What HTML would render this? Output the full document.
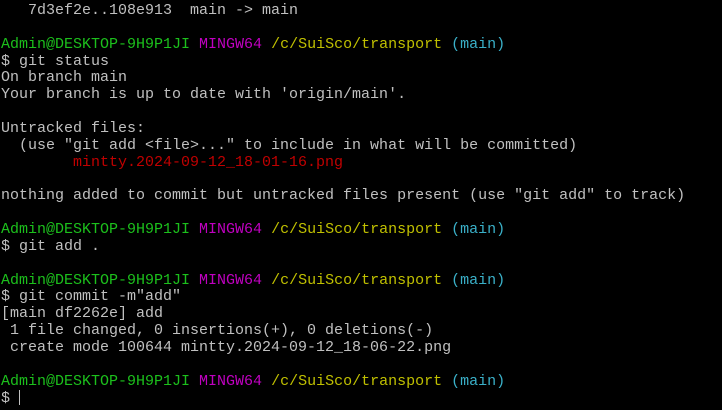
<!DOCTYPE html><html><head><style>
html,body{margin:0;background:#000;width:722px;height:410px;overflow:hidden}
pre{margin:0;padding:3px 0 0 1px;font-family:"Liberation Mono",monospace;font-size:15px;line-height:16.85px;color:#c0c0c0;white-space:pre}
.g{color:#1cc01c}.m{color:#c000c0}.y{color:#c0c000}.c{color:#3ab0c8}.r{color:#c00000}
.cur{display:inline-block;width:1px;height:15px;background:#c0c0c0;vertical-align:-3px}
</style></head><body><pre>   7d3ef2e..108e913  main -&gt; main

<span class="g">Admin@DESKTOP-9H9P1JI</span> <span class="m">MINGW64</span> <span class="y">/c/SuiSco/transport</span> <span class="c">(main)</span>
$ git status
On branch main
Your branch is up to date with 'origin/main'.

Untracked files:
  (use "git add &lt;file&gt;..." to include in what will be committed)
        <span class="r">mintty.2024-09-12_18-01-16.png</span>

nothing added to commit but untracked files present (use "git add" to track)

<span class="g">Admin@DESKTOP-9H9P1JI</span> <span class="m">MINGW64</span> <span class="y">/c/SuiSco/transport</span> <span class="c">(main)</span>
$ git add .

<span class="g">Admin@DESKTOP-9H9P1JI</span> <span class="m">MINGW64</span> <span class="y">/c/SuiSco/transport</span> <span class="c">(main)</span>
$ git commit -m"add"
[main df2262e] add
 1 file changed, 0 insertions(+), 0 deletions(-)
 create mode 100644 mintty.2024-09-12_18-06-22.png

<span class="g">Admin@DESKTOP-9H9P1JI</span> <span class="m">MINGW64</span> <span class="y">/c/SuiSco/transport</span> <span class="c">(main)</span>
$ <span class="cur"></span></pre></body></html>
